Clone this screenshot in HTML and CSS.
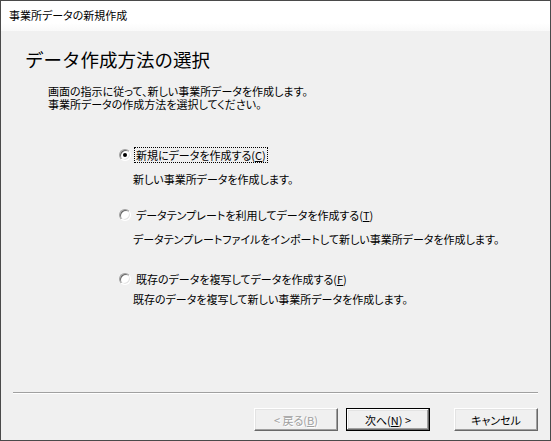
FILE: index.html
```html
<!DOCTYPE html>
<html lang="ja">
<head>
<meta charset="utf-8">
<title>事業所データの新規作成</title>
<link rel="stylesheet" href="styles.css">
</head>
<body>
<div class="window">
  <div class="titlebar">事業所データの新規作成</div>
  <div class="content">
    <h1 class="heading">データ作成方法の選択</h1>
    <div class="intro">
      <p class="line">画面の指示に従って、新しい事業所データを作成します。</p>
      <p class="line">事業所データの作成方法を選択してください。</p>
    </div>
    <div class="options">
      <div class="option opt1">
        <div class="row">
          <span class="radio checked"></span>
          <span class="label focus">新規にデータを作成する(<u>C</u>)</span>
        </div>
        <div class="desc">新しい事業所データを作成します。</div>
      </div>
      <div class="option opt2">
        <div class="row">
          <span class="radio"></span>
          <span class="label">データテンプレートを利用してデータを作成する(<u>T</u>)</span>
        </div>
        <div class="desc">データテンプレートファイルをインポートして新しい事業所データを作成します。</div>
      </div>
      <div class="option opt3">
        <div class="row">
          <span class="radio"></span>
          <span class="label">既存のデータを複写してデータを作成する(<u>F</u>)</span>
        </div>
        <div class="desc desc3">既存のデータを複写して新しい事業所データを作成します。</div>
      </div>
    </div>
    <div class="footer">
      <div class="separator"></div>
      <div class="buttons">
        <button class="btn disabled" type="button">&lt; 戻る(<u>B</u>)</button>
        <button class="btn default" type="button">次へ(<u>N</u>) &gt;</button>
        <button class="btn cancel" type="button">キャンセル</button>
      </div>
    </div>
  </div>
</div>
</body>
</html>
```

FILE: styles.css
```css
html, body {
  margin: 0;
  padding: 0;
  background: #f0f0f0;
}

body {
  font-family: "Noto Sans CJK JP", "Noto Sans", sans-serif;
  font-size: 11px;
  font-feature-settings: "palt";
  color: #000;
}

.window {
  width: 551px;
  height: 441px;
  box-sizing: border-box;
  border: 1px solid #4a4a4a;
  display: flex;
  flex-direction: column;
  background: #f0f0f0;
}

.titlebar {
  height: 30px;
  line-height: 28px;
  padding-left: 8px;
  background: linear-gradient(#ffffff 0, #ffffff 22px, #f9f9f9 30px);
  flex: none;
}

.content {
  flex: 1;
  display: flex;
  flex-direction: column;
  background: #f0f0f0;
}

.heading {
  margin: 16px 0 0 24px;
  font-size: 18.5px;
  line-height: 24px;
  font-weight: normal;
  font-feature-settings: normal;
}

.intro {
  margin: 14px 0 0 47px;
}

.line {
  margin: 0;
  height: 12px;
  line-height: 12px;
}

.line + .line {
  margin-top: 1px;
}

.options {
  flex: 1;
  margin-left: 117px;
}

.opt1 { margin-top: 37px; }
.opt2 { margin-top: 20px; }
.opt3 { margin-top: 24px; }

.row {
  display: flex;
  align-items: center;
  height: 16px;
}

.radio {
  width: 10px;
  height: 10px;
  border-radius: 50%;
  border: 1px solid;
  border-color: #a0a0a0 #ffffff #ffffff #a0a0a0;
  box-shadow: inset 1px 1px 0 #696969, inset -1px -1px 0 #e3e3e3;
  background: #fff;
  position: relative;
  flex: none;
  margin-left: 1px;
}

.radio.checked::after {
  content: "";
  position: absolute;
  left: 3px;
  top: 3px;
  width: 4px;
  height: 4px;
  border-radius: 50%;
  background: #000;
}

.label {
  margin-left: 3px;
  line-height: 14px;
  padding: 0 1px;
  border: 1px solid transparent;
}

.label.focus {
  border: 1px dotted #000;
}

.desc {
  margin: 8px 0 0 15px;
  line-height: 16px;
}

.desc3 {
  margin-top: 4px;
}

.footer {
  flex: none;
  padding: 0 12px 9px;
}

.separator {
  border-top: 1px solid #a0a0a0;
  border-bottom: 1px solid #ffffff;
  height: 0;
}

.buttons {
  margin-top: 14px;
  display: flex;
  justify-content: flex-end;
}

.btn {
  width: 84px;
  height: 23px;
  box-sizing: border-box;
  padding: 0;
  font-family: inherit;
  font-size: 11px;
  font-feature-settings: "palt";
  background: #f0f0f0;
  color: #000;
  border: 1px solid;
  border-color: #ffffff #696969 #696969 #ffffff;
  box-shadow: inset -1px -1px 0 #a0a0a0, inset 1px 1px 0 #e3e3e3;
  border-radius: 0;
}

.btn.default {
  margin-left: 8px;
  border-color: #000;
  box-shadow: inset -1px -1px 0 #696969, inset 1px 1px 0 #ffffff, inset -2px -2px 0 #a0a0a0, inset 2px 2px 0 #e3e3e3;
}

.btn.cancel {
  margin-left: 24px;
}

.btn.disabled {
  color: #a0a0a0;
  text-shadow: 1px 1px 0 #ffffff;
}
```
